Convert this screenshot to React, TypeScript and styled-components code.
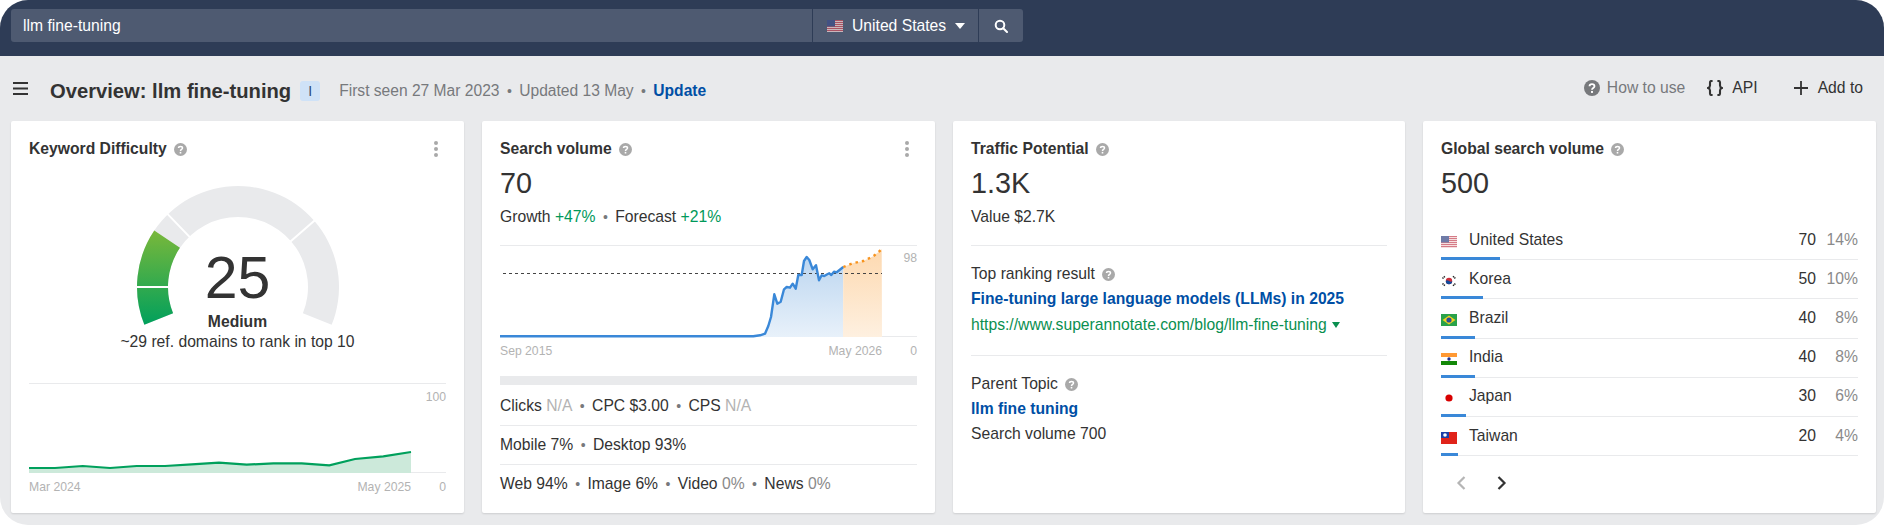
import React from "react";
import styled, { createGlobalStyle } from "styled-components";

const GlobalStyle = createGlobalStyle`
  html, body { margin: 0; padding: 0; background: #fff; }
  body { font-family: "Liberation Sans", Arial, sans-serif; color: #333; }
  * { box-sizing: border-box; }
`;

const Page = styled.div`
  width: 1884px;
  height: 525px;
  background: #e9eaec;
  border-radius: 28px;
  overflow: hidden;
`;
const TopBar = styled.header`
  height: 56px;
  background: #2e3c56;
  padding: 9px 0 0 11px;
`;
const SearchGroup = styled.div`
  display: flex;
  width: 1012px;
  height: 33px;
  border-radius: 3px;
  overflow: hidden;
  background: #4e5a71;
  color: #fff;
  font-size: 15.7px;
  line-height: 33px;
`;
const SearchText = styled.div`
  width: 801px;
  padding-left: 12px;
`;
const CountryPicker = styled.div`
  width: 166px;
  border-left: 1px solid #2e3c56;
  display: flex;
  align-items: center;
  padding-left: 14px;
  gap: 9px;
`;
const Caret = styled.span<{ $color?: string; $half?: number }>`
  display: inline-block;
  width: 0;
  height: 0;
  border-left: ${(p) => p.$half ?? 5}px solid transparent;
  border-right: ${(p) => p.$half ?? 5}px solid transparent;
  border-top: 6px solid ${(p) => p.$color ?? "#fff"};
`;
const SearchButton = styled.div`
  flex: 1;
  border-left: 1px solid #2e3c56;
  display: flex;
  align-items: center;
  justify-content: center;
`;
const Toolbar = styled.div`
  height: 65px;
  display: flex;
  align-items: center;
  padding: 0 21px 1px 13px;
`;
const PageTitle = styled.h1`
  margin: 5px 0 0 22px;
  font-size: 20.2px;
  line-height: 24px;
  font-weight: 700;
  color: #333;
`;
const IntentBadge = styled.span`
  margin: 5px 0 0 9px;
  width: 20px;
  height: 20px;
  border-radius: 3px;
  background: #cfe2f7;
  color: #2b4a75;
  font-size: 14px;
  line-height: 20px;
  text-align: center;
`;
const Meta = styled.div`
  margin: 5px 0 0 19px;
  font-size: 15.6px;
  color: #77797c;
`;
const Dot = styled.span`
  margin: 0 7.4px;
  color: #77797c;
  font-size: 14px;
`;
const UpdateLink = styled.a`
  font-weight: 700;
  color: #004fa5;
`;
const Actions = styled.nav`
  margin-left: auto;
  display: flex;
  align-items: center;
  font-size: 15.7px;
`;
const ActionItem = styled.span<{ $muted?: boolean; $gap: number; $ml: number }>`
  display: flex;
  align-items: center;
  gap: ${(p) => p.$gap}px;
  margin-left: ${(p) => p.$ml}px;
  color: ${(p) => (p.$muted ? "#77797c" : "#333")};
`;
const Cards = styled.main`
  display: grid;
  grid-template-columns: 453px 453px 452px 453px;
  column-gap: 18px;
  padding-left: 11px;
`;
const Card = styled.section`
  height: 392px;
  background: #fff;
  border-radius: 2px;
  box-shadow: 0 1px 2px rgba(0, 0, 0, 0.12);
  padding: 18px 18px 0;
  font-size: 15.7px;
  line-height: 20px;
`;
const CardHead = styled.div`
  display: flex;
  align-items: center;
  gap: 7px;
  height: 20px;
`;
const CardTitle = styled.h2`
  margin: 0;
  font-size: 15.7px;
  line-height: 20px;
  font-weight: 700;
  color: #333;
`;
const Kebab = styled.span`
  margin-left: auto;
  margin-right: 8px;
  display: flex;
  flex-direction: column;
  gap: 2px;
  i {
    width: 4px;
    height: 4px;
    border-radius: 50%;
    background: #a9a9a9;
  }
`;
const BigValue = styled.div`
  margin-top: 7px;
  font-size: 28.8px;
  line-height: 34px;
  color: #333;
`;
const SubLine = styled.div`
  margin-top: 7px;
  color: #333;
`;
const Up = styled.span`
  color: #00995a;
`;
const Gauge = styled.div`
  position: relative;
  width: 204px;
  height: 147px;
  margin: 26px auto 0;
`;
const Score = styled.div`
  position: absolute;
  left: 0;
  right: 0;
  top: 62px;
  text-align: center;
  font-size: 59px;
  line-height: 62px;
`;
const ScoreLabel = styled.div`
  position: absolute;
  left: 0;
  right: 0;
  top: 127px;
  text-align: center;
  font-weight: 700;
`;
const Centered = styled.div`
  text-align: center;
`;
const Plot = styled.div<{ $height: number; $mt: number }>`
  position: relative;
  margin-top: ${(p) => p.$mt}px;
  height: ${(p) => p.$height}px;
  border-top: 1px solid #e9eaec;
  border-bottom: 1px solid #e9eaec;
  svg {
    position: absolute;
    left: 0;
    top: 0;
    overflow: visible;
  }
`;
const MaxLabel = styled.span<{ $top: number }>`
  position: absolute;
  right: 0;
  top: ${(p) => p.$top}px;
  font-size: 12.2px;
  line-height: 16px;
  color: #b3b3b3;
`;
const Axis = styled.div`
  display: flex;
  justify-content: space-between;
  margin-top: 6px;
  font-size: 12.2px;
  line-height: 16px;
  color: #b3b3b3;
`;
const AxisDates = styled.div<{ $width: number }>`
  width: ${(p) => p.$width}px;
  display: flex;
  justify-content: space-between;
`;
const GrayBar = styled.div`
  margin-top: 17px;
  margin-bottom: 2px;
  height: 9px;
  background: #e9eaec;
`;
const StatRow = styled.div<{ $last?: boolean }>`
  height: 39px;
  line-height: 38px;
  border-bottom: ${(p) => (p.$last ? "none" : "1px solid #e9eaec")};
`;
const Faint = styled.span`
  color: #b3b3b3;
`;
const Dim = styled.span`
  color: #8a8a8a;
`;
const Divider = styled.hr<{ $mt: number }>`
  margin: ${(p) => p.$mt}px 0 0;
  border: 0;
  border-top: 1px solid #e9eaec;
`;
const Label = styled.div`
  margin-top: 18px;
  display: flex;
  align-items: center;
  gap: 7px;
`;
const StrongLink = styled.a`
  display: block;
  margin-top: 5px;
  font-weight: 700;
  color: #004fa5;
`;
const UrlLine = styled.div`
  margin-top: 6px;
  display: flex;
  align-items: center;
  gap: 5px;
  color: #0a8f50;
`;
const PlainLine = styled.div`
  margin-top: 5px;
`;
const CountryList = styled.div`
  margin-top: 21px;
`;
const CountryRow = styled.div`
  position: relative;
  height: 39.2px;
  display: flex;
  align-items: center;
  padding-bottom: 1px;
  border-bottom: 1px solid #e9eaec;
`;
const FlagBox = styled.span`
  width: 16px;
  height: 12px;
  margin-top: 4px;
  display: block;
  svg { display: block; }
`;
const CountryName = styled.span`
  margin-left: 12px;
`;
const CountryVolume = styled.span`
  margin-left: auto;
`;
const CountryShare = styled.span`
  width: 42px;
  text-align: right;
  color: #8a8a8a;
`;
const ShareBar = styled.span`
  position: absolute;
  left: 0;
  bottom: -1px;
  height: 3px;
  background: #3a88d8;
`;
const Pager = styled.div`
  display: flex;
  align-items: center;
  margin-top: 20px;
  padding-left: 15px;
  gap: 31px;
  svg { display: block; }
`;

const HelpIcon = ({ size = 13, color = "#a9a9a9" }: { size?: number; color?: string }) => (
  <svg width={size} height={size} viewBox="0 0 13 13">
    <circle cx="6.5" cy="6.5" r="6.5" fill={color} />
    <path d="M4.5 5.1c0-1.1.9-1.7 2-1.7s2 .6 2 1.6c0 1.5-2 1.4-2 2.9" fill="none" stroke="#fff" strokeWidth="1.5" />
    <rect x="5.7" y="8.9" width="1.6" height="1.6" fill="#fff" />
  </svg>
);

const FlagUS = ({ pale }: { pale?: boolean }) => (
  <svg width="16" height="12" viewBox="0 0 16 12" opacity={pale ? 0.75 : 1}>
    <rect width="16" height="12" fill="#f3d5d5" />
    {[0, 2, 4, 6, 8, 10].map((y) => (
      <rect key={y} y={y} width="16" height="1" fill="#c8505f" />
    ))}
    <rect width="8" height="6.5" fill="#3f4f8a" />
  </svg>
);
const FlagKR = () => (
  <svg width="16" height="12" viewBox="0 0 16 12">
    <rect width="16" height="12" fill="#fff" />
    <circle cx="8" cy="6" r="3.2" fill="#cd2e3a" />
    <path d="M4.8 6a3.2 3.2 0 0 0 6.4 0c-1 1.4-2.2.4-3.2 0s-2.2-1.4-3.2 0z" fill="#0f4a9c" />
    <path d="M1.5 3.5 4 1.2M12 1.2l2.5 2.3M1.5 8.5 4 10.8M12 10.8l2.5-2.3" stroke="#222" strokeWidth="1.5" strokeDasharray="1.3 .6" />
  </svg>
);
const FlagBR = () => (
  <svg width="16" height="12" viewBox="0 0 16 12">
    <rect width="16" height="12" fill="#2aa24a" />
    <path d="M8 1.4 14.4 6 8 10.6 1.6 6z" fill="#f4d31f" />
    <circle cx="8" cy="6" r="2.6" fill="#2b4f96" />
  </svg>
);
const FlagIN = () => (
  <svg width="16" height="12" viewBox="0 0 16 12">
    <rect width="16" height="4" fill="#ff9933" />
    <rect y="4" width="16" height="4" fill="#fff" />
    <rect y="8" width="16" height="4" fill="#138808" />
    <circle cx="8" cy="6" r="1.7" fill="#1d2f8f" />
  </svg>
);
const FlagJP = () => (
  <svg width="16" height="12" viewBox="0 0 16 12">
    <rect width="16" height="12" fill="#fff" />
    <circle cx="8" cy="6" r="3.6" fill="#d80000" />
  </svg>
);
const FlagTW = () => (
  <svg width="16" height="12" viewBox="0 0 16 12">
    <rect width="16" height="12" fill="#e0231a" />
    <rect width="8" height="6" fill="#1c3fa8" />
    <circle cx="4" cy="3" r="1.8" fill="#fff" />
  </svg>
);

const GaugeArt = () => {
  const cx = 102;
  const cy = 102;
  const R = 101;
  const r = 70;
  const p = (rad: number, deg: number) => {
    const a = (deg * Math.PI) / 180;
    return `${(cx + rad * Math.cos(a)).toFixed(2)} ${(cy - rad * Math.sin(a)).toFixed(2)}`;
  };
  const seg = (from: number, to: number) => {
    const large = from - to > 180 ? 1 : 0;
    return `M${p(R, from)}A${R} ${R} 0 ${large} 1 ${p(R, to)}L${p(r, to)}A${r} ${r} 0 ${large} 0 ${p(r, from)}Z`;
  };
  return (
    <svg width="204" height="147" viewBox="0 0 204 147" style={{ display: "block" }}>
      <defs>
        <linearGradient id="kdGrad" gradientUnits="userSpaceOnUse" x1="0" y1="140" x2="0" y2="45">
          <stop offset="0" stopColor="#00a05c" />
          <stop offset="1" stopColor="#7ab83a" />
        </linearGradient>
      </defs>
      <path d={seg(202, -22)} fill="#e9eaec" />
      <path d={seg(202, 146)} fill="url(#kdGrad)" />
      <path
        d={`M${p(r - 2, 180)}L${p(R + 2, 180)}M${p(r - 2, 134)}L${p(R + 2, 134)}M${p(r - 2, 41)}L${p(R + 2, 41)}`}
        stroke="#fff"
        strokeWidth="2"
      />
    </svg>
  );
};

const kdLine: [number, number][] = [[87,291],[165,291],[248,285],[330,291],[410,285],[495,285],[575,280],[657,275],[740,281],[820,277],[905,277],[988,283],[1065,264],[1150,256],[1233,243]];
const kdPts = kdLine.map(([x, y]) => `${(x / 3 - 29).toFixed(1)},${(y / 3 + 370 - 383).toFixed(1)}`).join(" ");

const blue: [number, number][] = [[30,316],[790,316],[810,313],[825,308],[835,285],[843,258],[853,190],[862,218],[872,212],[882,175],[890,168],[900,170],[908,158],[917,173],[925,132],[935,132],[942,90],[950,78],[958,87],[968,115],[978,103],[987,148],[995,133],[1003,135],[1012,130],[1018,127],[1024,132],[1032,122],[1040,124],[1060,108]];
const orange: [number, number][] = [[1060,108],[1090,96],[1120,90],[1150,76],[1175,55]];
const conv = (pts: [number, number][]) => pts.map(([x, y]) => `${(x / 3 - 10).toFixed(1)},${(y / 3 - 15).toFixed(1)}`).join(" ");
const bluePts = conv(blue);
const orangePts = conv(orange);

const countries = [
  { name: "United States", vol: 70, share: 14, bar: 59, flag: <FlagUS pale /> },
  { name: "Korea", vol: 50, share: 10, bar: 42, flag: <FlagKR /> },
  { name: "Brazil", vol: 40, share: 8, bar: 34, flag: <FlagBR /> },
  { name: "India", vol: 40, share: 8, bar: 34, flag: <FlagIN /> },
  { name: "Japan", vol: 30, share: 6, bar: 25, flag: <FlagJP /> },
  { name: "Taiwan", vol: 20, share: 4, bar: 17, flag: <FlagTW /> },
];

export default function App() {
  return (
    <Page>
      <GlobalStyle />
      <TopBar>
        <SearchGroup>
          <SearchText>llm fine-tuning</SearchText>
          <CountryPicker>
            <FlagUS pale />
            <span>United States</span>
            <Caret />
          </CountryPicker>
          <SearchButton>
            <svg width="14" height="14" viewBox="0 0 14 14" fill="none" stroke="#fff" strokeWidth="2">
              <circle cx="6" cy="6" r="4.3" />
              <path d="M9.2 9.2 13 13" strokeLinecap="round" />
            </svg>
          </SearchButton>
        </SearchGroup>
      </TopBar>
      <Toolbar>
        <svg width="15" height="13" viewBox="0 0 15 13" fill="#333">
          <rect width="15" height="2" />
          <rect y="5.5" width="15" height="2" />
          <rect y="11" width="15" height="2" />
        </svg>
        <PageTitle>Overview: llm fine-tuning</PageTitle>
        <IntentBadge>I</IntentBadge>
        <Meta>
          First seen 27 Mar 2023<Dot>•</Dot>Updated 13 May<Dot>•</Dot>
          <UpdateLink>Update</UpdateLink>
        </Meta>
        <Actions>
          <ActionItem $muted $gap={7} $ml={0}>
            <HelpIcon size={16} color="#77797c" />
            How to use
          </ActionItem>
          <ActionItem $gap={9} $ml={22}>
            <svg width="16" height="16" viewBox="0 0 16 16" fill="none" stroke="#333" strokeWidth="2.1">
              <path d="M5.6 1H4.4C3.4 1 3 1.6 3 2.4v3c0 1.2-.8 2.2-2 2.6 1.2.4 2 1.4 2 2.6v3c0 .8.4 1.4 1.4 1.4h1.2" />
              <path d="M10.4 1h1.2c1 0 1.4.6 1.4 1.4v3c0 1.2.8 2.2 2 2.6-1.2.4-2 1.4-2 2.6v3c0 .8-.4 1.4-1.4 1.4h-1.2" />
            </svg>
            API
          </ActionItem>
          <ActionItem $gap={10} $ml={36}>
            <svg width="14" height="14" viewBox="0 0 14 14" stroke="#333" strokeWidth="1.8">
              <path d="M7 0v14M0 7h14" />
            </svg>
            Add to
          </ActionItem>
        </Actions>
      </Toolbar>
      <Cards>
        <Card>
          <CardHead>
            <CardTitle>Keyword Difficulty</CardTitle>
            <HelpIcon />
            <Kebab><i /><i /><i /></Kebab>
          </CardHead>
          <Gauge>
            <GaugeArt />
            <Score>25</Score>
            <ScoreLabel>Medium</ScoreLabel>
          </Gauge>
          <Centered>~29 ref. domains to rank in top 10</Centered>
          <Plot $height={90} $mt={31}>
            <svg width="417" height="90" viewBox="0 0 417 90">
              <polygon points={`0,89 ${kdPts} 382,89`} fill="#cce9da" />
              <polyline points={kdPts} fill="none" stroke="#00a05c" strokeWidth="2.2" />
            </svg>
            <MaxLabel $top={5}>100</MaxLabel>
          </Plot>
          <Axis>
            <AxisDates $width={382}>
              <span>Mar 2024</span>
              <span>May 2025</span>
            </AxisDates>
            <span>0</span>
          </Axis>
        </Card>

        <Card>
          <CardHead>
            <CardTitle>Search volume</CardTitle>
            <HelpIcon />
            <Kebab><i /><i /><i /></Kebab>
          </CardHead>
          <BigValue>70</BigValue>
          <SubLine>
            Growth <Up>+47%</Up>
            <Dot>•</Dot>Forecast <Up>+21%</Up>
          </SubLine>
          <Plot $height={92} $mt={18}>
            <svg width="417" height="92" viewBox="0 0 417 92">
              <defs>
                <linearGradient id="svBlue" x1="0" y1="0" x2="0" y2="1">
                  <stop offset="0" stopColor="#bcd6f0" />
                  <stop offset="1" stopColor="#e8f1fa" />
                </linearGradient>
                <linearGradient id="svOrange" x1="0" y1="0" x2="0" y2="1">
                  <stop offset="0" stopColor="#fdd9b0" />
                  <stop offset="1" stopColor="#fef0e0" />
                </linearGradient>
              </defs>
              <polygon points={`253,91 ${bluePts.split(" ").slice(2).join(" ")} 343,91`} fill="url(#svBlue)" />
              <polygon points={`${orangePts} 382,91 343,91`} fill="url(#svOrange)" />
              <path d="M3 27.5H382" stroke="#444" strokeWidth="1" strokeDasharray="3 3" />
              <polyline points={bluePts} fill="none" stroke="#3a88d8" strokeWidth="2.4" strokeLinejoin="round" />
              <polyline points={orangePts} fill="none" stroke="#f7931e" strokeWidth="2.4" strokeDasharray="2.5 4" />
            </svg>
            <MaxLabel $top={4}>98</MaxLabel>
          </Plot>
          <Axis>
            <AxisDates $width={382}>
              <span>Sep 2015</span>
              <span>May 2026</span>
            </AxisDates>
            <span>0</span>
          </Axis>
          <GrayBar />
          <StatRow>
            Clicks <Faint>N/A</Faint><Dot>•</Dot>CPC $3.00<Dot>•</Dot>CPS <Faint>N/A</Faint>
          </StatRow>
          <StatRow>
            Mobile 7%<Dot>•</Dot>Desktop 93%
          </StatRow>
          <StatRow $last>
            Web 94%<Dot>•</Dot>Image 6%<Dot>•</Dot>Video <Dim>0%</Dim><Dot>•</Dot>News <Dim>0%</Dim>
          </StatRow>
        </Card>

        <Card>
          <CardHead>
            <CardTitle>Traffic Potential</CardTitle>
            <HelpIcon />
          </CardHead>
          <BigValue>1.3K</BigValue>
          <SubLine>Value $2.7K</SubLine>
          <Divider $mt={18} />
          <Label>
            Top ranking result <HelpIcon />
          </Label>
          <StrongLink>Fine-tuning large language models (LLMs) in 2025</StrongLink>
          <UrlLine>
            https://www.superannotate.com/blog/llm-fine-tuning
            <Caret $color="#0a8f50" $half={4} />
          </UrlLine>
          <Divider $mt={20} />
          <Label>
            Parent Topic <HelpIcon />
          </Label>
          <StrongLink>llm fine tuning</StrongLink>
          <PlainLine>Search volume 700</PlainLine>
        </Card>

        <Card>
          <CardHead>
            <CardTitle>Global search volume</CardTitle>
            <HelpIcon />
          </CardHead>
          <BigValue>500</BigValue>
          <CountryList>
            {countries.map((c) => (
              <CountryRow key={c.name}>
                <FlagBox>{c.flag}</FlagBox>
                <CountryName>{c.name}</CountryName>
                <CountryVolume>{c.vol}</CountryVolume>
                <CountryShare>{c.share}%</CountryShare>
                <ShareBar style={{ width: c.bar }} />
              </CountryRow>
            ))}
          </CountryList>
          <Pager>
            <svg width="10" height="14" viewBox="0 0 10 14" fill="none" stroke="#b5b5b5" strokeWidth="2.2">
              <path d="M8.5 1 2.5 7l6 6" />
            </svg>
            <svg width="10" height="14" viewBox="0 0 10 14" fill="none" stroke="#333" strokeWidth="2.2">
              <path d="M1.5 1l6 6-6 6" />
            </svg>
          </Pager>
        </Card>
      </Cards>
    </Page>
  );
}
